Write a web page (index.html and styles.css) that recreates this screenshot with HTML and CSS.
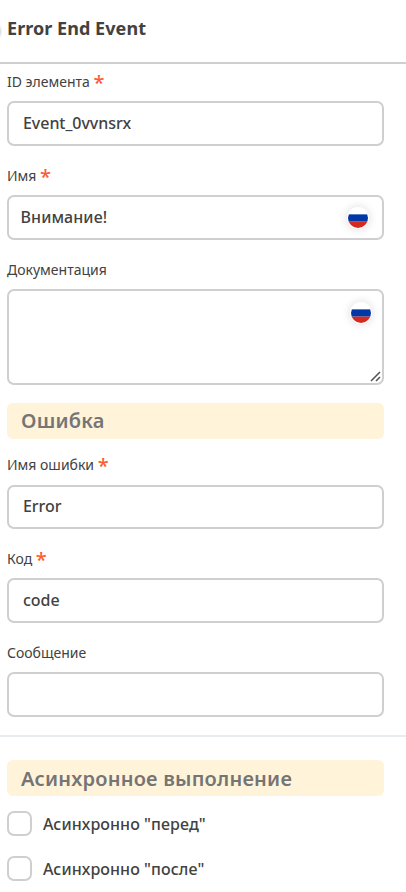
FILE: index.html
```html
<!DOCTYPE html>
<html lang="ru">
<head>
<meta charset="utf-8">
<title>Error End Event</title>
<link rel="stylesheet" href="styles.css">
</head>
<body>
<main class="panel">
  <header class="header"><span class="header-knob"></span><h1 class="title">Error End Event</h1></header>
  <section class="group">
    <div class="field">
      <div class="label">ID элемента <span class="required">*</span></div>
      <div class="input">Event_0vvnsrx</div>
    </div>
    <div class="field">
      <div class="label">Имя <span class="required">*</span></div>
      <div class="input localized">Внимание!
        <svg class="flag" width="22" height="22" viewBox="0 0 22 22"><rect width="22" height="22" fill="#fff"/><rect y="7" width="22" height="8" fill="#0039a6"/><rect y="15" width="22" height="7" fill="#d52b1e"/></svg>
      </div>
    </div>
    <div class="field">
      <div class="label">Документация</div>
      <div class="input textarea">
        <svg class="flag" width="22" height="22" viewBox="0 0 22 22"><rect width="22" height="22" fill="#fff"/><rect y="7" width="22" height="8" fill="#0039a6"/><rect y="15" width="22" height="7" fill="#d52b1e"/></svg>
        <svg class="grip" width="11" height="11" viewBox="0 0 11 11"><path d="M1 10 L10 1 M6 10 L10 6" fill="none" stroke="#505050" stroke-width="1.5"/></svg>
      </div>
    </div>
  </section>
  <section class="group error-group">
    <h2 class="banner">Ошибка</h2>
    <div class="field">
      <div class="label label-first">Имя ошибки <span class="required">*</span></div>
      <div class="input short">Error</div>
    </div>
    <div class="field">
      <div class="label">Код <span class="required">*</span></div>
      <div class="input">code</div>
    </div>
    <div class="field">
      <div class="label">Сообщение</div>
      <div class="input"></div>
    </div>
  </section>
  <section class="group async-group">
    <h2 class="banner">Асинхронное выполнение</h2>
    <div class="check"><span class="box"></span>Асинхронно "перед"</div>
    <div class="check"><span class="box"></span>Асинхронно "после"</div>
  </section>
</main>
</body>
</html>
```
FILE: styles.css
```css
* { box-sizing: border-box; }
body { margin: 0; background: #fff; color: #424242; font-family: "Noto Sans", sans-serif; }
.panel { width: 406px; height: 892px; overflow: hidden; }
.header { position: relative; height: 64px; padding: 16px 7px 0; border-bottom: 2px solid #cfcfcf; }
.header-knob { position: absolute; left: -19px; top: 22px; width: 19px; height: 19px; border-radius: 50%; box-shadow: 0 0 3px rgba(0, 0, 0, .4); }
.title { margin: 0; font-size: 18px; line-height: 25px; font-weight: 700; letter-spacing: .05px; }
.group { padding: 0 22px 0 7px; }
.field + .field { margin-top: 12px; }
.label { height: 37px; font-size: 14px; line-height: 36px; font-weight: 420; letter-spacing: 0; white-space: nowrap; }
.label-first { line-height: 34px; }
.required { position: relative; top: 3px; color: #ff5c35; font-size: 20px; line-height: 1; font-weight: 500; }
.input { position: relative; height: 45px; padding-left: 14px; border: 2px solid #cfcfcf; border-radius: 7px; font-size: 16px; line-height: 40px; font-weight: 500; letter-spacing: -.05px; }
.localized { padding-left: 11.5px; letter-spacing: .08px; }
.short { height: 44px; line-height: 39px; }
.textarea { height: 96px; }
.flag { position: absolute; right: 13px; top: 10px; border-radius: 50%; border: 1px solid #fff; box-shadow: 0 0 10px rgba(0, 0, 0, .15); }
.textarea .flag { right: 10px; top: 11px; }
.grip { position: absolute; right: 1px; bottom: 1px; }
.error-group { padding-top: 18px; }
.banner { height: 36px; margin: 0 0 9px; padding-left: 14px; border-radius: 6px; background: #fff4d9; color: #757575; font-size: 20px; line-height: 35px; font-weight: 600; letter-spacing: .22px; }
.async-group { margin-top: 18px; padding-top: 23px; border-top: 2px solid #e9ecef; }
.async-group .banner { margin-bottom: 15px; line-height: 37px; }
.check { display: flex; align-items: center; gap: 11px; height: 25px; font-size: 16px; line-height: 25px; padding-top: 2px; font-weight: 500; letter-spacing: .07px; }
.check + .check { margin-top: 20px; }
.box { width: 25px; height: 25px; margin-top: -2px; border: 2px solid #cfcfcf; border-radius: 7px; }
```
